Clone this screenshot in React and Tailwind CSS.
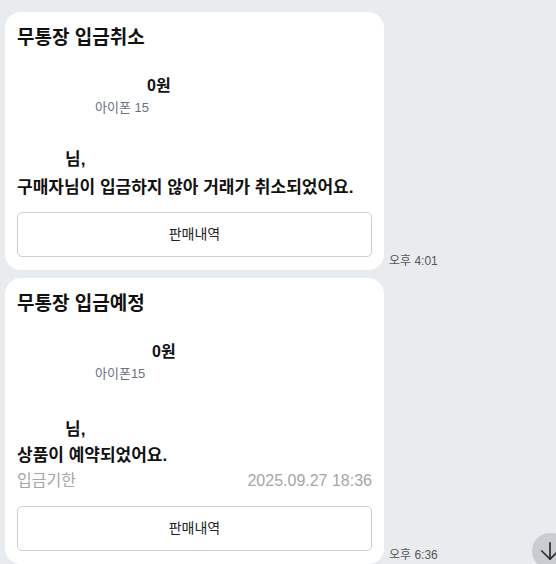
import { ArrowDown } from 'lucide-react';

const font = { fontFamily: '"Liberation Sans", "Noto Sans CJK KR", sans-serif' };

const SaleButton = function({ className }) {
    return (
        <button className={`w-full h-[45px] border border-[#cfcfcf] rounded-[5px] bg-white text-[14px] text-[#222] ${className}`}>
            판매내역
        </button>
    );
};

const Product = function({ name, amountPad }) {
    return (
        <div className="mt-[22px] pl-[78px]">
            <div className={`text-[16px] leading-[24px] font-bold text-[#111] ${amountPad}`}>0원</div>
            <div className="text-[13px] leading-[20px] text-[#6b7280]">{name}</div>
        </div>
    );
};

const App = function() {
    return (
        <div style={font} className="w-[556px] h-[564px] overflow-hidden bg-[#e9ecef] relative">
            <div className="pl-[5px] pt-[12px] flex flex-col gap-[8px]">
                {/* 입금취소 */}
                <div className="flex items-end gap-[5px]">
                    <div className="w-[379px] bg-white rounded-[16px] pt-3 px-3 pb-[13px]">
                        <h2 className="text-[19px] leading-[28px] font-bold text-[#111]">무통장 입금취소</h2>
                        <Product name="아이폰 15" amountPad="pl-[52px]" />
                        <div className="mt-[28px] text-[17px] leading-[28px] font-bold text-[#111]">
                            <div className="pl-[48px]">님,</div>
                            <div>구매자님이 입금하지 않아 거래가 취소되었어요.</div>
                        </div>
                        <SaleButton className="mt-[10px]" />
                    </div>
                    <span className="text-[12px] leading-[16px] text-[#555] mb-[1px]">오후 4:01</span>
                </div>

                {/* 입금예정 */}
                <div className="flex items-end gap-[5px]">
                    <div className="w-[379px] bg-white rounded-[16px] pt-3 px-3 pb-[13px]">
                        <h2 className="text-[19px] leading-[28px] font-bold text-[#111]">무통장 입금예정</h2>
                        <Product name="아이폰15" amountPad="pl-[57px]" />
                        <div className="mt-[33px] text-[17px] leading-[26px] font-bold text-[#111]">
                            <div className="pl-[48px]">님,</div>
                            <div>상품이 예약되었어요.</div>
                        </div>
                        <div className="flex justify-between text-[16px] leading-[24px] text-[#a3a7ab]">
                            <span>입금기한</span>
                            <span>2025.09.27 18:36</span>
                        </div>
                        <SaleButton className="mt-[13px]" />
                    </div>
                    <span className="text-[12px] leading-[16px] text-[#555] mb-[1px]">오후 6:36</span>
                </div>
            </div>

            <div className="absolute left-[532px] top-[533px] w-[36px] h-[36px] rounded-full bg-[#c9ccd0] flex items-center justify-center text-[#333]">
                <ArrowDown size={28} strokeWidth={1.5} />
            </div>
        </div>
    );
};

export default App;
